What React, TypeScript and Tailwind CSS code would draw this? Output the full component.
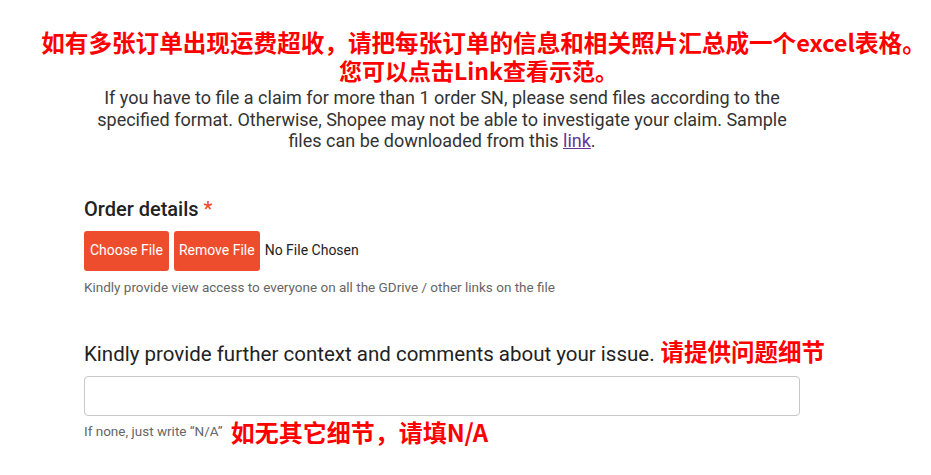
export default function App() {
  const roboto = { fontFamily: "Roboto, 'Noto Sans', sans-serif" };
  const cjk = { fontFamily: "'Noto Sans CJK SC', 'Noto Sans', sans-serif" };
  return (
    <div className="w-[931px] h-[475px] bg-white overflow-hidden">
      <div
        className="pt-[28px] text-center text-[#ff0000] font-bold leading-[29px] whitespace-nowrap"
        style={cjk}
      >
        <p className="pl-[36px] text-[23.6px]">
          如有多张订单出现运费超收，请把每张订单的信息和相关照片汇总成一个excel表格。
        </p>
        <p className="pl-[26px] text-[23px] leading-[27px]">您可以点击Link查看示范。</p>
      </div>

      <div className="ml-[84px] w-[716px]" style={roboto}>
        <p className="mt-[3px] text-center text-[18px] leading-[21.5px] text-[#333]">
          If you have to file a claim for more than 1 order SN, please send files according to the
          <br />
          specified format. Otherwise, Shopee may not be able to investigate your claim. Sample
          <br />
          files can be downloaded from this <a className="text-[#663399] underline">link</a>.
        </p>

        {/* Order details */}
        <div className="mt-[43px]">
          <div className="text-[20px] leading-[28px] font-medium text-[#222]">
            Order details <span className="text-[#ee4d2d]">*</span>
          </div>
          <div className="mt-[8px] flex items-center gap-[5px]">
            <button className="h-[40px] px-[6px] rounded-[3px] bg-[#ee4d2d] text-white text-[14px]">
              Choose File
            </button>
            <button className="h-[40px] px-[5px] rounded-[3px] bg-[#ee4d2d] text-white text-[14px]">
              Remove File
            </button>
            <span className="text-[14px] text-[#222]">No File Chosen</span>
          </div>
          <p className="mt-[8px] text-[13.5px] leading-[16px] text-[#666]">
            Kindly provide view access to everyone on all the GDrive / other links on the file
          </p>
        </div>

        {/* Comments */}
        <div className="mt-[42px]">
          <div className="flex items-baseline gap-[6px] whitespace-nowrap">
            <span className="text-[20.5px] leading-[28px] text-[#222]">
              Kindly provide further context and comments about your issue.
            </span>
            <span
              className="text-[23.5px] leading-[28px] font-bold text-[#ff0000]"
              style={cjk}
            >
              请提供问题细节
            </span>
          </div>
          <div className="mt-[8px] h-[40px] rounded-[4px] border border-[#c8c8c8]" />
          <div className="flex items-center gap-[8px] whitespace-nowrap">
            <span className="text-[13.5px] text-[#666]">If none, just write “N/A”</span>
            <span className="text-[24px] leading-[32px] font-bold text-[#ff0000]" style={cjk}>
              如无其它细节，请填N/A
            </span>
          </div>
        </div>
      </div>
    </div>
  );
}
